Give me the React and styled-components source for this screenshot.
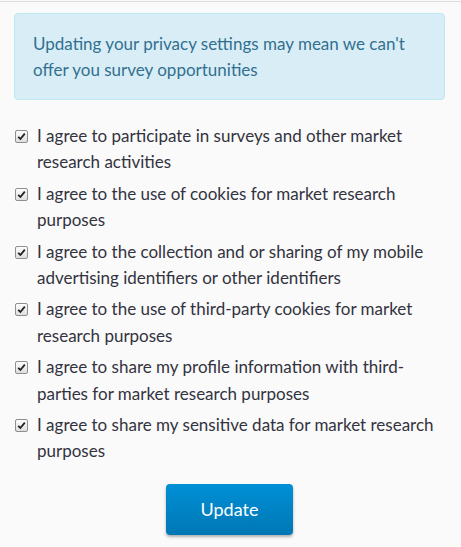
import React from "react";
import styled, { createGlobalStyle } from "styled-components";

const Global = createGlobalStyle`
  html, body { margin: 0; padding: 0; background: #fafafa; }
  body { font-family: Lato, "Open Sans", sans-serif; }
`;

const Page = styled.div`
  border-top: 1px solid #dcdcdc;
  margin-top: 1px;
  padding: 11px 16px 10px 14px;
  display: flex;
  flex-direction: column;
`;

const Alert = styled.div`
  background: #d9edf7;
  border: 1px solid #bce8f1;
  border-radius: 4px;
  color: #31708f;
  font-size: 17px;
  line-height: 26px;
  padding: 17px 18px 16px 18px;
  margin-bottom: 23px;
`;

const List = styled.div`
  display: flex;
  flex-direction: column;
  gap: 5px;
`;

const Row = styled.label`
  display: flex;
  align-items: flex-start;
  gap: 9px;
  color: #333340;
  font-size: 17px;
  line-height: 26.4px;
`;

const Box = styled.span`
  flex: none;
  width: 11px;
  height: 11px;
  margin-top: 7px;
  margin-left: 1px;
  border: 1px solid #8f8f8f;
  border-radius: 2px;
  background: linear-gradient(#fdfdfd, #dedede);
  display: flex;
  align-items: center;
  justify-content: center;
`;

const Footer = styled.div`
  display: flex;
  justify-content: center;
  margin-top: 19px;
`;

const Button = styled.button`
  width: 127px;
  height: 51px;
  border: none;
  border-radius: 4px;
  background: linear-gradient(#0090d6, #0077b4);
  box-shadow: 0 2px 3px rgba(0, 0, 0, 0.3);
  color: #fff;
  font-family: inherit;
  font-size: 18px;
  cursor: pointer;
`;

const Check = () => (
  <svg width="9" height="9" viewBox="0 0 9 9">
    <path d="M1.2 4.8 L3.4 7 L7.8 1.6" fill="none" stroke="#222" strokeWidth="1.8" />
  </svg>
);

const items = [
  "I agree to participate in surveys and other market research activities",
  "I agree to the use of cookies for market research purposes",
  "I agree to the collection and or sharing of my mobile advertising identifiers or other identifiers",
  "I agree to the use of third-party cookies for market research purposes",
  "I agree to share my profile information with third-parties for market research purposes",
  "I agree to share my sensitive data for market research purposes",
];

export default function App() {
  return (
    <>
      <Global />
      <Page>
        <Alert>
          Updating your privacy settings may mean we can't offer you survey opportunities
        </Alert>
        <List>
          {items.map((t) => (
            <Row key={t}>
              <Box><Check /></Box>
              <span>{t}</span>
            </Row>
          ))}
        </List>
        <Footer>
          <Button>Update</Button>
        </Footer>
      </Page>
    </>
  );
}
